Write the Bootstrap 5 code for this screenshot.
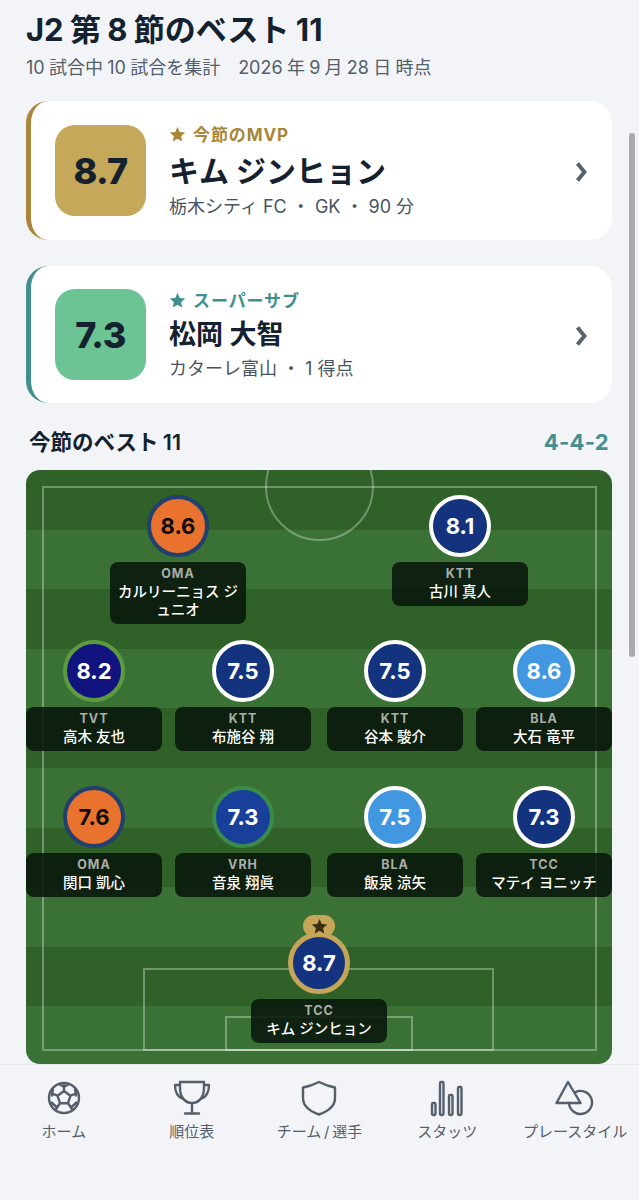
<!DOCTYPE html>
<html lang="ja">
<head>
<meta charset="utf-8">
<title>J2 第8節のベスト11</title>
<link href="https://cdn.jsdelivr.net/npm/bootstrap@5.3.0/dist/css/bootstrap.min.css" rel="stylesheet">
<style>
html,body{height:1200px;overflow:hidden}
body{background:#f2f4f8;color:#14212e;font-family:Inter,"Noto Sans CJK JP",sans-serif;width:639px;position:relative}
.page-shell{height:1200px}
.page-main{padding:0 27px 0 26px;overflow:hidden;height:1064px;flex:none}
.page-title{font-size:31px;font-weight:700;line-height:34px;margin:13px 0 0;word-spacing:-1px}
.page-sub{font-size:18px;line-height:22px;color:#545e6a;margin:10px 0 22px;word-spacing:-.8px}
.hero{border:0;border-left:5px solid #a98638;border-radius:22px;height:139px;padding-left:24px;padding-right:25px;margin-bottom:26px;flex-direction:row;align-items:center;background:#fff}
.hero.sub-hero{border-left-color:#3f8f8f;height:137px;margin-bottom:0}
.tile{width:91px;height:91px;border-radius:20px;background:#c5a85a;font-size:36px;font-weight:800;letter-spacing:-.6px;flex:none}
.sub-hero .tile{background:#6cc494}
.hero-body{margin-left:23px;flex:1;padding-top:3px}
.hero-tag{font-size:17px;font-weight:700;color:#a98638;line-height:20px;letter-spacing:.9px}
.sub-hero .hero-tag{color:#3f8f8f}
.hero-tag svg{width:17px;height:17px;margin-right:7px;vertical-align:-2px;fill:currentColor}
.hero-name{font-size:30px;font-weight:700;line-height:40px;margin-top:6px}
.sub-hero .hero-name{font-size:27px;margin-top:4px}
.hero-meta{font-size:18px;line-height:24px;color:#485362;margin-top:4px}
.sub-hero .hero-meta{margin-top:2px}
.chev{width:12px;height:22px;fill:none;stroke:#566270;stroke-width:4;margin-top:3px}
.sec-head{margin:27px 3px 15px 3px;height:25px}
.sec-title{font-size:21.5px;font-weight:600;line-height:25px;word-spacing:-1px}
.sec-form{font-size:22px;font-weight:700;color:#458f8f;line-height:25px;letter-spacing:.3px}
.pitch{height:594px;border-radius:14px;position:relative;overflow:hidden;background:repeating-linear-gradient(180deg,#2f6128 0,#2f6128 59.6px,#397234 59.6px,#397234 119.2px)}
.pl{position:absolute;border:2.5px solid rgba(255,255,255,.32)}
.pl-outer{left:16px;top:16px;width:555px;height:565px}
.pl-circle{left:239px;top:-38px;width:109px;height:109px;border-radius:50%}
.pl-box{left:117px;top:498px;width:351px;height:83px}
.pl-goal{left:199px;top:546px;width:188px;height:35px}
.player{position:absolute;width:136px;display:flex;flex-direction:column;align-items:center}
.disc{width:62px;height:62px;border-radius:50%;border:4px solid #fff;font-size:22px;font-weight:700;color:#fff;background:#14337f;position:relative}
.d-oma{background:#e9722f;border-color:#22406f;color:#0d0a08}
.d-tvt{background:#11147f;border-color:#5c9a3f}
.d-bla{background:#4298e0}
.d-vrh{background:#18409a;border-color:#3a8a4a}
.d-gk{border-color:#c5a557;width:62px;height:62px;border-width:5px}
.crown{position:absolute;top:-22px;left:50%;margin-left:-16px;width:32px;height:22px;border-radius:11px;background:#c5a557}
.crown svg{width:17px;height:17px;fill:#3f2f12}
.plate{width:136px;margin-top:5px;background:rgba(8,20,10,.86);border-radius:8px;padding:4px 6px 5px;text-align:center}
.plate-team{font-size:12.5px;font-weight:700;letter-spacing:1px;line-height:15px;color:#a9aeaa}
.plate-name{font-size:14.5px;font-weight:500;line-height:18px;color:#fff;margin-top:2px}
.tabbar{flex:1;border-top:1px solid #e7e9ed;background:#f2f4f8;padding-top:13px}
.tab{flex:1 1 0;color:#555e6b;font-size:15px;line-height:20px;min-width:0}
.tab-ico{width:44px;height:40px;fill:none;stroke:#555e6b;stroke-width:2.4;stroke-linejoin:round;stroke-linecap:round;display:block}
.tab span{margin-top:4px;white-space:nowrap}
.tab-tight{word-spacing:-1.5px}
.thumb{position:absolute;left:629px;top:133px;width:6px;height:524px;border-radius:3px;background:#a7abb1}
</style>
</head>
<body>
<div class="page-shell d-flex flex-column">
  <div class="page-main">
    <h1 class="page-title">J2 第 8 節のベスト 11</h1>
    <p class="page-sub">10 試合中 10 試合を集計　2026 年 9 月 28 日 時点</p>

    <div class="card hero">
      <div class="tile d-flex align-items-center justify-content-center">8.7</div>
      <div class="hero-body">
        <div class="hero-tag"><svg viewBox="0 0 24 24"><path d="M12 1.5l3.2 7 7.6.8-5.7 5.1 1.6 7.5L12 18l-6.7 3.9 1.6-7.5L1.200 9.300l7.600-.8z"/></svg>今節のMVP</div>
        <div class="hero-name">キム ジンヒョン</div>
        <div class="hero-meta">栃木シティ FC ・ GK ・ 90 分</div>
      </div>
      <svg class="chev" viewBox="0 0 12 22"><path d="M2.500 2.500L9.500 11l-7 8.500"/></svg>
    </div>

    <div class="card hero sub-hero">
      <div class="tile d-flex align-items-center justify-content-center">7.3</div>
      <div class="hero-body">
        <div class="hero-tag"><svg viewBox="0 0 24 24"><path d="M12 1.5l3.2 7 7.6.8-5.7 5.1 1.6 7.5L12 18l-6.7 3.9 1.6-7.5L1.200 9.300l7.600-.8z"/></svg>スーパーサブ</div>
        <div class="hero-name">松岡 大智</div>
        <div class="hero-meta">カターレ富山 ・ 1 得点</div>
      </div>
      <svg class="chev" viewBox="0 0 12 22"><path d="M2.500 2.500L9.500 11l-7 8.500"/></svg>
    </div>

    <div class="sec-head d-flex justify-content-between align-items-center">
      <div class="sec-title">今節のベスト 11</div>
      <div class="sec-form">4-4-2</div>
    </div>

    <div class="pitch">
      <div class="pl pl-outer"></div>
      <div class="pl pl-circle"></div>
      <div class="pl pl-box"></div>
      <div class="pl pl-goal"></div>

      <div class="player" style="left:84px;top:25px"><div class="disc d-oma d-flex align-items-center justify-content-center">8.6</div><div class="plate"><div class="plate-team">OMA</div><div class="plate-name">カルリーニョス ジュニオ</div></div></div>
      <div class="player" style="left:366px;top:25px"><div class="disc d-flex align-items-center justify-content-center">8.1</div><div class="plate"><div class="plate-team">KTT</div><div class="plate-name">古川 真人</div></div></div>

      <div class="player" style="left:0;top:170px"><div class="disc d-tvt d-flex align-items-center justify-content-center">8.2</div><div class="plate"><div class="plate-team">TVT</div><div class="plate-name">高木 友也</div></div></div>
      <div class="player" style="left:149px;top:170px"><div class="disc d-flex align-items-center justify-content-center">7.5</div><div class="plate"><div class="plate-team">KTT</div><div class="plate-name">布施谷 翔</div></div></div>
      <div class="player" style="left:301px;top:170px"><div class="disc d-flex align-items-center justify-content-center">7.5</div><div class="plate"><div class="plate-team">KTT</div><div class="plate-name">谷本 駿介</div></div></div>
      <div class="player" style="left:450px;top:170px"><div class="disc d-bla d-flex align-items-center justify-content-center">8.6</div><div class="plate"><div class="plate-team">BLA</div><div class="plate-name">大石 竜平</div></div></div>

      <div class="player" style="left:0;top:316px"><div class="disc d-oma d-flex align-items-center justify-content-center">7.6</div><div class="plate"><div class="plate-team">OMA</div><div class="plate-name">関口 凱心</div></div></div>
      <div class="player" style="left:149px;top:316px"><div class="disc d-vrh d-flex align-items-center justify-content-center">7.3</div><div class="plate"><div class="plate-team">VRH</div><div class="plate-name">音泉 翔眞</div></div></div>
      <div class="player" style="left:301px;top:316px"><div class="disc d-bla d-flex align-items-center justify-content-center">7.5</div><div class="plate"><div class="plate-team">BLA</div><div class="plate-name">飯泉 涼矢</div></div></div>
      <div class="player" style="left:450px;top:316px"><div class="disc d-flex align-items-center justify-content-center">7.3</div><div class="plate"><div class="plate-team">TCC</div><div class="plate-name">マテイ ヨニッチ</div></div></div>

      <div class="player" style="left:225px;top:462px"><div class="disc d-gk d-flex align-items-center justify-content-center"><span class="crown d-flex align-items-center justify-content-center"><svg viewBox="0 0 24 24"><path d="M12 1.5l3.2 7 7.600.8-5.700 5.100 1.600 7.500L12 18l-6.700 3.900 1.600-7.500L1.200 9.300l7.600-.8z"/></svg></span>8.7</div><div class="plate"><div class="plate-team">TCC</div><div class="plate-name">キム ジンヒョン</div></div></div>
    </div>
  </div>

  <nav class="tabbar d-flex">
    <div class="tab d-flex flex-column align-items-center">
      <svg class="tab-ico" viewBox="0 0 44 40"><circle cx="22" cy="20" r="15"/><path d="M22 13l6.500 4.700-2.500 7.600h-8l-2.500-7.600zM22 13V6.500M28.500 17.700l6-2.300M26 25.300l3.800 5.500M18 25.300l-3.800 5.500M15.500 17.700l-6-2.300M17 6L22 9l5-3M33 11l1 6.500M9.500 24.500l5.500 5M34.500 24.500l-5.500 5M11 11l-1 6.500"/></svg>
      <span>ホーム</span>
    </div>
    <div class="tab d-flex flex-column align-items-center">
      <svg class="tab-ico" viewBox="0 0 44 40"><path d="M10 4h24v6c0 9-5 15-12 15S10 19 10 10zM10 7H5c0 7 3 12 8 14M34 7h5c0 7-3 12-8 14M22 25v10.500M15 35.500h14"/></svg>
      <span>順位表</span>
    </div>
    <div class="tab d-flex flex-column align-items-center">
      <svg class="tab-ico" viewBox="0 0 44 40"><path d="M22 4c5 2.500 10 4.500 16 5.500V20c0 8-6 13-16 16.500C12 33 6 28 6 20V9.500C12 8.500 17 6.500 22 4z"/></svg>
      <span class="tab-tight">チーム / 選手</span>
    </div>
    <div class="tab d-flex flex-column align-items-center">
      <svg class="tab-ico" viewBox="0 0 44 40"><rect x="7" y="25" width="3.500" height="12" rx="1.200"/><rect x="15" y="4" width="3.500" height="33" rx="1.200"/><rect x="24" y="17" width="3.500" height="20" rx="1.200"/><rect x="33" y="9" width="3.500" height="28" rx="1.200"/></svg>
      <span>スタッツ</span>
    </div>
    <div class="tab d-flex flex-column align-items-center">
      <svg class="tab-ico" viewBox="0 0 44 40"><path d="M15 4l12.500 21H3.500z"/><path d="M22.500 14.100A11.500 11.500 0 1 1 16 25"/></svg>
      <span>プレースタイル</span>
    </div>
  </nav>
</div>
<div class="thumb"></div>
</body>
</html>
